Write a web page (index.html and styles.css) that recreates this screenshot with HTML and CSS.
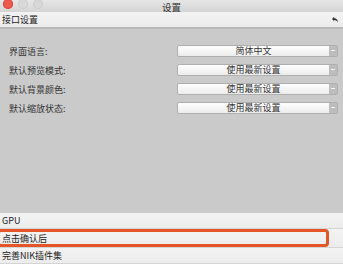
FILE: index.html
```html
<!DOCTYPE html>
<html lang="zh-CN">
<head>
    <meta charset="UTF-8">
    <meta name="viewport" content="width=device-width, initial-scale=1.0">
    <title>设置</title>
    <link rel="stylesheet" href="styles.css">
</head>
<body>
    <div class="window">
        <div class="titlebar">
            <div class="lights">
                <span class="light red"></span>
                <span class="light"></span>
                <span class="light"></span>
            </div>
            <div class="title">设置</div>
        </div>
        <div class="section top">
            <span>接口设置</span>
            <svg class="back" width="8" height="8" viewBox="0 0 8 8">
                <path d="M1 3 L3.2 0.8 L3.2 2.2 Q7 2.2 6.8 6.8 Q6 4 3.2 4 L3.2 5.2 Z" fill="#333"/>
            </svg>
        </div>
        <div class="content">
            <div class="row">
                <label>界面语言:</label>
                <div class="select"><span class="value">简体中文</span><span class="arrow"></span></div>
            </div>
            <div class="row">
                <label>默认预览模式:</label>
                <div class="select"><span class="value">使用最新设置</span><span class="arrow"></span></div>
            </div>
            <div class="row">
                <label>默认背景颜色:</label>
                <div class="select"><span class="value">使用最新设置</span><span class="arrow"></span></div>
            </div>
            <div class="row">
                <label>默认缩放状态:</label>
                <div class="select"><span class="value">使用最新设置</span><span class="arrow"></span></div>
            </div>
        </div>
        <div class="section">GPU</div>
        <div class="section marked">点击确认后<div class="highlight"></div></div>
        <div class="section">完善NIK插件集</div>
    </div>
</body>
</html>
```

FILE: styles.css
```css
body {
    margin: 0;
    font-family: "Noto Sans CJK SC", "Liberation Sans", sans-serif;
    color: #222;
}
.window {
    width: 343px;
    height: 264px;
    overflow: hidden;
    background-color: #cacaca;
    display: flex;
    flex-direction: column;
}
.titlebar {
    height: 12px;
    flex-shrink: 0;
    background: linear-gradient(#e6e6e6, #d4d4d4);
    position: relative;
}
.lights {
    display: flex;
    gap: 5px;
    padding-left: 3px;
    margin-top: -1px;
}
.light {
    width: 10px;
    height: 10px;
    border-radius: 50%;
    background-color: #d8d8d8;
    box-shadow: inset 0 0 0 1px #cdcdcd;
}
.light.red {
    background-color: #ec5a52;
    box-shadow: inset 0 0 0 1px #d8453e;
}
.title {
    position: absolute;
    left: 0;
    right: 0;
    top: 0;
    z-index: 1;
    text-align: center;
    font-size: 9.5px;
    line-height: 14px;
    color: #333;
}
.section {
    height: 15px;
    flex-shrink: 0;
    background: linear-gradient(#f3f3f3, #ececec);
    border-bottom: 1px solid #d4d4d4;
    font-size: 9px;
    line-height: 15px;
    padding-left: 2px;
    display: flex;
    align-items: center;
    position: relative;
}
.section.top {
    border-bottom: 2px solid #b9b9b9;
    justify-content: space-between;
    padding-right: 4px;
}
.section.marked {
    height: 18px;
}
.back {
    margin-top: 1px;
}
.highlight {
    position: absolute;
    left: -3px;
    top: 0;
    width: 326px;
    height: 12px;
    border: 3px solid #e4552a;
    border-radius: 4px;
}
.content {
    flex: 1;
    padding-top: 16px;
    display: flex;
    flex-direction: column;
    gap: 7px;
}
.row {
    display: flex;
    align-items: center;
    padding-left: 9px;
    height: 12px;
}
.row label {
    width: 168px;
    font-size: 9px;
    color: #333;
}
.select {
    width: 161px;
    height: 12px;
    display: flex;
    border: 1px solid #afafaf;
    border-radius: 2px;
    background: linear-gradient(#fefefe, #ececec);
    box-sizing: border-box;
}
.value {
    flex: 1;
    text-align: center;
    font-size: 9px;
    line-height: 10px;
    color: #333;
}
.arrow {
    width: 8px;
    background-color: #bdbdbd;
    position: relative;
}
.arrow::after {
    content: "";
    position: absolute;
    left: 2px;
    top: 4px;
    width: 4px;
    height: 1px;
    background-color: #f4f4f4;
}
```
